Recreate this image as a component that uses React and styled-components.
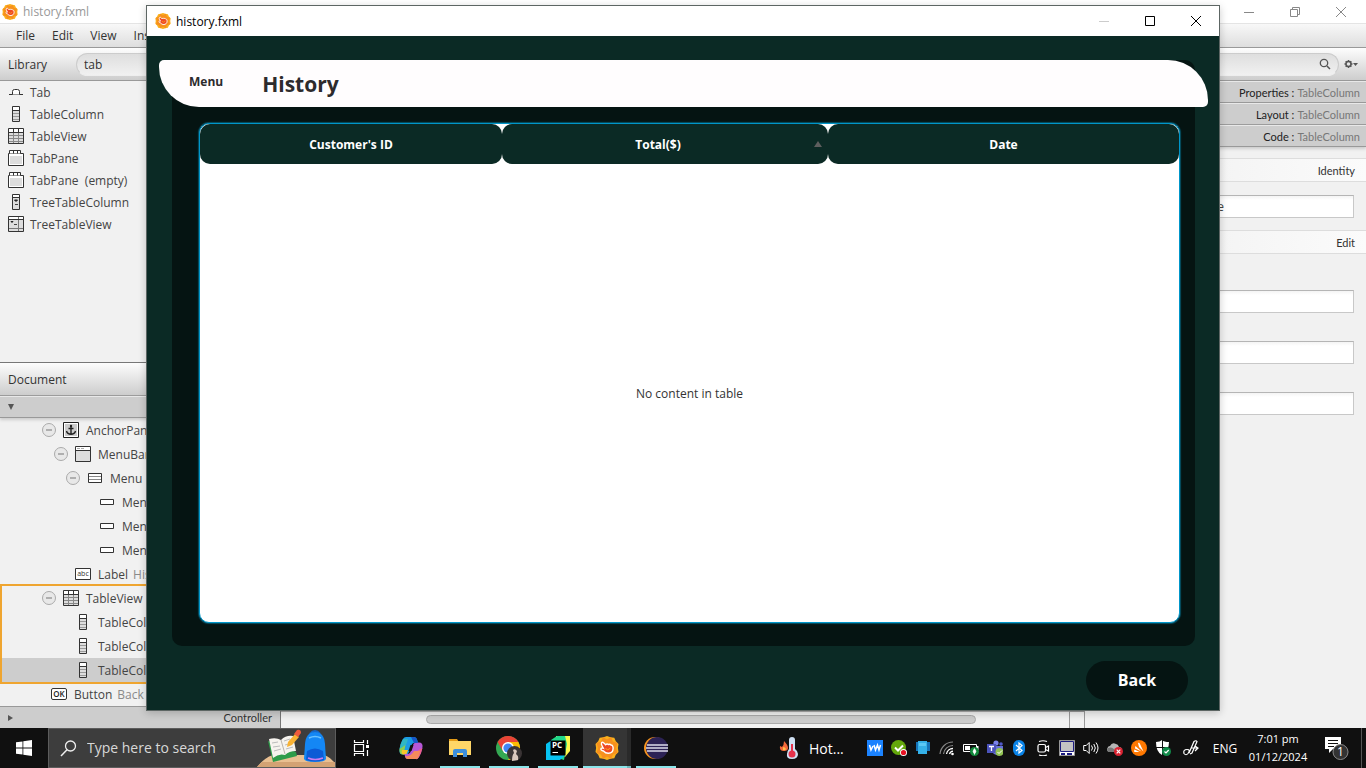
import React from "react";
import styled, { createGlobalStyle, css } from "styled-components";

const Global = createGlobalStyle`
  *, *::before, *::after { box-sizing: border-box; }
  html, body { margin: 0; padding: 0; }
  body, button, input {
    font-family: "Open Sans", "Noto Sans", sans-serif;
    font-size: 12px;
    line-height: 17px;
  }
  button { border: 0; padding: 0; background: none; color: inherit; cursor: default; }
  ul { list-style: none; margin: 0; padding: 0; }
  svg { display: block; flex: none; }
`;

const GREEN = "#0b2a25";
const DARK = "#051412";

/* ---------- editor in the background ---------- */

const Desktop = styled.div`
  display: flex;
  flex-direction: column;
  min-height: 100vh;
  overflow: hidden;
  background: #f1f1f1;
  color: #333;
`;

const Workspace = styled.main`
  position: relative;
  flex: 1;
  display: flex;
  flex-direction: column;
`;

const Caption = styled.header`
  display: flex;
  align-items: center;
  height: ${(p) => (p.$front ? 30 : 24)}px;
  padding: ${(p) => (p.$front ? "0 0 0 8px" : "0 2px")};
  background: #fff;
  color: ${(p) => (p.$front ? "#000" : "#999")};
  border-bottom: ${(p) => (p.$front ? 0 : 1)}px solid #e4e4e4;
`;

const CaptionTitle = styled.h1`
  flex: 1;
  margin: 0 0 0 5px;
  font-size: 12px;
  font-weight: 400;
`;

const CaptionButton = styled.button`
  display: grid;
  place-items: center;
  width: 46px;
  height: 100%;
  color: ${(p) => p.$color};
`;

const MenuStrip = styled.nav`
  display: flex;
  align-items: center;
  gap: 17px;
  height: 24px;
  padding-left: 16px;
  background: linear-gradient(#f8f8f8, #dedede);
  border-bottom: 1px solid #999;
`;

const Columns = styled.div`
  flex: 1;
  display: flex;
`;

const Column = styled.section`
  display: flex;
  flex-direction: column;
  min-width: 0;
  ${(p) => (p.$width ? `flex: none; width: ${p.$width}px;` : "flex: 1;")}
`;

const PanelHeader = styled.header`
  display: flex;
  align-items: center;
  gap: ${(p) => (p.$tight ? 5 : 12)}px;
  height: ${(p) => (p.$ruled ? 34 : 33)}px;
  padding: 0 8px;
  background: linear-gradient(#fdfdfd, #cdcdcd);
  border-top: ${(p) => (p.$ruled ? 1 : 0)}px solid #777;
  border-bottom: 1px solid #999;
`;

const PanelTitle = styled.h2`
  width: 56px;
  margin: 0;
  font-size: 12px;
  font-weight: 400;
`;

const SearchPill = styled.label`
  flex: 1;
  display: flex;
  align-items: center;
  height: 23px;
  padding: 0 7px;
  border: 1px solid #ccc;
  border-bottom-color: #eee;
  border-radius: 12px;
  background: linear-gradient(#dedede, #f1f1f1);
`;

const PillInput = styled.input`
  flex: 1;
  min-width: 0;
  border: 0;
  padding: 0;
  background: none;
  color: #333;
  outline: 0;
`;

const LibraryList = styled.ul`
  flex: 1;
`;

const LibraryRow = styled.li`
  display: flex;
  align-items: center;
  gap: 6px;
  height: 22px;
  padding-left: 8px;
  color: #444;
`;

const Section = styled.button`
  display: flex;
  align-items: center;
  justify-content: space-between;
  height: 22px;
  padding: 0 8px;
  background: #cdcdcd;
  border-top: 1px solid #e8e8e8;
  border-bottom: 1px solid #999;
  color: #333;
  box-shadow: ${(p) => (p.$raised ? "0 2px 3px #ccc" : "none")};
`;

const Tree = styled.ul`
  white-space: nowrap;
`;

const TreeGroup = styled.ul`
  margin-left: 2px;
  outline: 2px solid #efa530;
  & > li { margin-left: -2px; }
`;

const TreeRow = styled.li`
  display: flex;
  align-items: center;
  gap: 3px;
  height: 24px;
  padding-left: ${(p) => 30 + p.$depth * 12}px;
  background: ${(p) => (p.$selected ? "#cdcdcd" : "transparent")};
  color: #444;
`;

const Toggle = styled.button`
  display: grid;
  place-items: center;
  width: 14px;
  height: 14px;
  border: 1px solid #aaa;
  border-radius: 50%;
  background: #e8e8e8;
  color: #777;
`;

const ToggleSpace = styled.span`
  width: 14px;
`;

const IconSlot = styled.span`
  display: grid;
  place-items: center;
  width: ${(p) => p.$width}px;
`;

const Muted = styled.span`
  margin-left: 2px;
  color: #8a8a8a;
`;

const ControllerBar = styled(Section)`
  border-top-color: #999;
  border-bottom: 0;
  border-right: 1px solid #777;
  font-family: Lato, "Open Sans", sans-serif;
  font-size: 11px;
`;

const Canvas = styled.div`
  flex: 1;
`;

const ScrollTrack = styled.div`
  height: 17px;
  padding: 3px 93px 0 145px;
  border-top: 1px solid #aaa;
  background: #f1f1f1;
`;

const ScrollThumb = styled.div`
  height: 9px;
  border: 1px solid #aaa;
  border-radius: 5px;
  background: #cbcbcb;
`;

const ScrollRow = styled.div`
  display: grid;
  grid-template-columns: 1fr 16px;
`;

const ScrollCorner = styled.div`
  border: 1px solid #999;
  border-bottom: 0;
`;

const InspectorBar = styled(Section)`
  justify-content: flex-end;
  gap: 3px;
  padding: 0 6px;
  color: #222;
  font-family: Lato, "Open Sans", sans-serif;
  font-size: 11px;
`;

const BarTarget = styled.span`
  color: #777;
`;

const Inspector = styled.form`
  display: flex;
  flex-direction: column;
  padding-top: 11px;
`;

const GroupTitle = styled.h3`
  height: 24px;
  margin: 0;
  padding: 3px 11px;
  font-family: Lato, "Open Sans", sans-serif;
  font-size: 11px;
  font-weight: 400;
  text-align: right;
  background: linear-gradient(90deg, #eee, #fbfbfb);
  border-top: 1px solid #ddd;
  border-bottom: 1px solid #ddd;
`;

const FieldStack = styled.div`
  display: flex;
  flex-direction: column;
  align-items: flex-end;
  gap: 28px;
  padding: ${(p) => (p.$tall ? 36 : 13)}px 12px 12px;
`;

const Field = styled.input`
  width: 160px;
  height: 23px;
  padding: 0 4px;
  border: 1px solid #c8c8c8;
  border-top-color: #b5b5b5;
  background: linear-gradient(#f4f4f4, #fff 4px);
  color: #444;
`;

/* ---------- application window ---------- */

const AppWindow = styled.section`
  position: absolute;
  inset: 5px 146px 17px;
  display: flex;
  flex-direction: column;
  border: 1px solid #5d6664;
  background: ${GREEN};
  box-shadow: 0 2px 8px rgba(0, 0, 0, 0.2);
`;

const Scene = styled.div`
  flex: 1;
  display: flex;
  flex-direction: column;
  padding: 24px 11px 10px 12px;
`;

const Stage = styled.div`
  flex: 1;
  display: grid;
`;

const Card = styled.div`
  grid-area: 1 / 1;
  display: flex;
  margin: 0 13px;
  padding: 63px 15px 23px 27px;
  border-radius: 10px;
  background: ${DARK};
`;

const Banner = styled.div`
  grid-area: 1 / 1;
  align-self: start;
  display: flex;
  align-items: center;
  gap: 39px;
  height: 47px;
  padding: 0 30px;
  border-radius: 5px 40px 5px 40px;
  background: #fffdfe;
  color: #2d2b2d;
`;

const MenuButton = styled.button`
  font-weight: 700;
  margin-bottom: 4px;
`;

const PageTitle = styled.h2`
  margin: 0;
  font-size: 21px;
  line-height: 30px;
  font-weight: 700;
`;

const TableFrame = styled.div`
  flex: 1;
  display: flex;
  border: 1px solid #0096c9;
  border-radius: 10px;
  background: #fff;
  box-shadow: 0 0 1px 1px #064f63;
`;

const Table = styled.table`
  width: 100%;
  table-layout: fixed;
  border-spacing: 0;
  color: #333;
`;

const HeadRow = styled.tr`
  height: 40px;
  background: linear-gradient(#f4f4f4, #d8d8d8);
`;

const HeadCell = styled.th`
  width: ${(p) => p.$width};
  padding: 0;
  border-radius: 10px;
  background: ${GREEN};
  color: #fff;
  font-weight: 700;
`;

const HeadLabel = styled.div`
  display: grid;
  grid-template-columns: ${(p) => (p.$sorted ? "1fr 14px" : "1fr")};
  align-items: center;
`;

const EmptyCell = styled.td`
  padding: 0;
  text-align: center;
`;

const Actions = styled.div`
  display: flex;
  justify-content: flex-end;
  padding: 15px 20px 0 0;
`;

const BackButton = styled.button`
  width: 102px;
  height: 39px;
  border-radius: 20px;
  background: ${DARK};
  color: #fff;
  font-size: 16px;
  font-weight: 700;
`;

/* ---------- taskbar ---------- */

const Taskbar = styled.footer`
  display: flex;
  height: 40px;
  background: #101010;
  color: #fff;
`;

const TaskButton = styled.button`
  display: grid;
  place-items: center;
  width: ${(p) => p.$width || 48}px;
  color: #fff;
  ${(p) =>
    p.$running &&
    css`
      background: linear-gradient(#8be5ea, #8be5ea) center bottom / 40px 2px no-repeat;
    `}
  ${(p) =>
    p.$active &&
    css`
      background: linear-gradient(#8be5ea, #8be5ea) bottom / 100% 2px no-repeat, #353535;
      box-shadow: inset -4px 0 rgba(0, 0, 0, 0.2);
    `}
`;

const TaskList = styled.div`
  display: flex;
  gap: 1px;
  flex: 1;
`;

const SearchBox = styled.label`
  display: flex;
  align-items: center;
  gap: 10px;
  width: 288px;
  padding-left: 11px;
  border: 1px solid #5c5c5c;
  background: #3d3d3d;
`;

const SearchInput = styled.input`
  flex: 1;
  min-width: 0;
  padding: 0;
  border: 0;
  outline: 0;
  background: none;
  color: #ddd;
  font-size: 14px;
  line-height: 20px;
  &::placeholder { color: #d8d8d8; opacity: 1; }
`;

const Weather = styled.button`
  display: flex;
  align-items: center;
  gap: 8px;
  width: 84px;
  font-size: 14px;
`;

const Clock = styled.time`
  display: flex;
  flex-direction: column;
  justify-content: center;
  width: 70px;
  line-height: 18px;
  font-size: 11px;
  text-align: center;
`;

const ShowDesktop = styled.button`
  width: 5px;
  border-left: 1px solid #555;
`;

/* ---------- drawings ---------- */

const Svg = ({ w = 16, h = w, vb, children, ...rest }) => (
  <svg width={w} height={h} viewBox={vb || `0 0 ${w} ${h}`} fill="none" aria-hidden="true" {...rest}>
    {children}
  </svg>
);

const SceneBuilder = ({ size = 16 }) => (
  <Svg w={size} vb="0 0 24 24">
    <path d="M12 0l3.500 1.200 3.800.500 1.500 3.500L23.500 8l-.600 4 .600 4-2.700 2.800-1.500 3.500-3.800.500L12 24l-3.500-1.200-3.800-.500-1.500-3.500L.5 16l.600-4-.600-4 2.700-2.800 1.500-3.500 3.800-.500z" fill="#fbb01c" />
    <path d="M8 1l4 2.500L16 1l2 4.500 4.500 1.500L21 12l1.500 5-4.500 1.500-2 4.500-4-2.500L8 23l-2-4.500L1.500 17 3 12 1.500 7 6 5.500z" fill="#f7901e" />
    <path d="M6.500 7c1-1.500 2.600-.200 4 1.700 1.200-1 2-1 2.900-.200 1.200-.600 2-.300 2.600.500 1.400 0 2.200 1.500 2.100 3.500 0 2.600-2 4.600-4.700 4.800-2.200.100-3.600-.800-4.900-2.300-2-.500-3-1.600-2.500-2.500.500-.700 1.400-.600 2.300-.300-1-2-2.600-3.900-1.800-5.200z" fill="#ef4a24" stroke="#fff" strokeWidth="1.400" />
    <path d="M10.500 12l2 2 3-2" stroke="#f9a51a" />
  </Svg>
);

const Minimize = () => <Svg w={10}><path d="M0 5.500h10" stroke="currentColor" /></Svg>;
const Maximize = () => <Svg w={10}><path d="M.5.500h9v9h-9z" stroke="currentColor" /></Svg>;
const Restore = () => <Svg w={10}><path d="M.5 2.500h7v7h-7zM2.500 2.500v-2h7v7h-2" stroke="currentColor" /></Svg>;
const Close = () => <Svg w={10}><path d="M0 0l10 10M10 0L0 10" stroke="currentColor" /></Svg>;
const Lens = () => <Svg w={12}><circle cx="5" cy="5" r="3.700" stroke="#555" strokeWidth="1.300" /><path d="M8 8l3 3" stroke="#555" strokeWidth="1.500" /></Svg>;
const Gear = () => (
  <Svg w={14} h={10}>
    <circle cx="4.500" cy="5" r="2.500" stroke="#555" strokeWidth="1.500" />
    <path d="M4.500 1v1.500M4.500 7.500V9M.5 5H2M7 5h1.500M1.700 2.200l1 1M6.300 6.800l1 1M7.300 2.200l-1 1M2.700 6.800l-1 1" stroke="#555" strokeWidth="1.500" />
    <path d="M9 4h5l-2.500 3z" fill="#555" />
  </Svg>
);

const TabIcon = () => <Svg><path d="M1 10.500h14" stroke="#333" /><path d="M4.500 10.500v-3q0-2 2-2h3q2 0 2 2v3" fill="#fff" stroke="#333" /></Svg>;
const ColumnIcon = () => <Svg><path d="M4.500.500h7v15h-7z" fill="#ddd" stroke="#333" /><path d="M5 1h6v3H5z" fill="#fff" /><path d="M5 4.500h6" stroke="#333" /><path d="M5 7.500h6M5 10.500h6M5 13.500h6" stroke="#999" /></Svg>;
const GridIcon = () => <Svg><path d="M.5.500h15v15H.5z" fill="#ddd" stroke="#333" /><path d="M1 1h14v3H1z" fill="#fff" /><path d="M1 7.500h14M1 10.500h14M1 13.500h14M5.500 5v10M10.500 5v10" stroke="#888" /><path d="M1 4.500h14M5.500 1v3M10.500 1v3" stroke="#333" /></Svg>;
const TabPaneIcon = () => <Svg><path d="M.5 3.500h15v12H.5z" fill="#fff" stroke="#333" /><path d="M2 6h12v8H2z" fill="#ddd" /><path d="M1.500 3.500v-3h11v3M5.500.500v3M9.500.500v3" fill="#fff" stroke="#333" /></Svg>;
const TreeColumnIcon = () => <Svg><path d="M4.500.500h7v15h-7z" fill="#ddd" stroke="#333" /><path d="M5 1h6v2H5z" fill="#fff" /><path d="M5 3.500h6" stroke="#333" /><path d="M6.500 6h3L8 7.500z" fill="#222" stroke="#222" /><path d="M7 10.500h3" stroke="#444" /></Svg>;
const TreeViewIcon = () => <Svg><path d="M.5.500h15v15H.5z" fill="#ddd" stroke="#333" /><path d="M1 1h14v2H1z" fill="#fff" /><path d="M10.500 1v14M1 12.500h14" stroke="#777" /><path d="M1 3.500h14" stroke="#333" /><path d="M3 5.500h2L4 6.500z" fill="#222" stroke="#222" /><path d="M6 8.500h3" stroke="#444" /></Svg>;
const AnchorIcon = () => <Svg><path d="M.5.500h15v15H.5z" fill="#fff" stroke="#222" /><path d="M2 2h12v12H2z" fill="#ccc" /><circle cx="8" cy="4" r="1.200" fill="#222" /><path d="M8 4v8M5.500 6.500h5M3.500 9c.500 2 2 3.300 4.500 3.300s4-1.300 4.500-3.300" stroke="#222" strokeWidth="1.400" /></Svg>;
const MenuBarIcon = () => <Svg><path d="M.5.500h15v15H.5z" fill="#ddd" stroke="#333" /><path d="M1 1h14v3H1z" fill="#fff" /><path d="M1 4.500h14" stroke="#333" /><path d="M2 2.500h3M6 2.500h3" stroke="#aaa" /></Svg>;
const MenuIcon = () => <Svg><path d="M1.500 3.500h13v9h-13z" fill="#fff" stroke="#333" /><path d="M2 6.500h12M2 9.500h12" stroke="#888" /></Svg>;
const MenuItemIcon = () => <Svg><path d="M1.500 5.500h13v5h-13z" fill="#fff" stroke="#333" /></Svg>;
const LabelIcon = () => <Svg><path d="M.5 2.500h15v11H.5z" fill="#fff" stroke="#333" /><text x="8" y="10" textAnchor="middle" fontSize="7" fill="#333">abc</text></Svg>;
const ButtonIcon = () => <Svg><rect x=".5" y="2.500" width="15" height="11" rx="1.500" fill="#fff" stroke="#333" /><text x="8" y="11" textAnchor="middle" fontSize="8" fontWeight="600" fill="#222">OK</text></Svg>;
const Minus = () => <Svg w={6}><path d="M0 3h6" stroke="#777" /></Svg>;
const Down = () => <Svg w={6}><path d="M0 0h6L3 6z" fill="#555" /></Svg>;
const Right = () => <Svg w={6}><path d="M0 0v6l5-3z" fill="#555" /></Svg>;
const SortUp = () => <Svg w={8} h={6}><path d="M0 6h8L4 0z" fill="#5e5e5e" /></Svg>;

const WindowsLogo = () => <Svg><path d="M0 2.300l6.500-.900v6.200H0zM7.300 1.300L16 0v7.600H7.300zM0 8.400h6.500v6.200L0 13.700zM7.300 8.400H16V16l-8.700-1.300z" fill="#fff" /></Svg>;
const SearchLens = () => <Svg w={17}><circle cx="10.500" cy="6" r="5" stroke="#eee" strokeWidth="1.300" /><path d="M7 9.700L1 16" stroke="#eee" strokeWidth="1.500" /></Svg>;
const StudyArt = () => (
  <Svg w={78} h={38}>
    <path d="M0 38c4-5 9-10 16-12h50c6 1 9 5 12 8v4z" fill="#e9bf91" />
    <path d="M0 38l5-5h73v5z" fill="#d3a274" />
    <path d="M11 12l5 21 24-6-1-4z" fill="#2e9c4a" />
    <path d="M12 10q7-2 12 1 5-5 12-4l3 15q-7 0-11 4-6-2-12 3z" fill="#f6f3ee" />
    <path d="M24 11l4 14" stroke="#b9b4ac" />
    <path d="M15 14l6-1M16 18l7-1M17 22l7-2M27 12l6-2M28 16l7-2M29 20l7-2" stroke="#bbb" />
    <path d="M30 18l1-5 7-8 4 3-7 8z" fill="#f9b233" />
    <path d="M37 5l3-4q4-1 4 3l-3 4z" fill="#ef5a3c" />
    <path d="M53 5q5-6 10 0" stroke="#1667c9" strokeWidth="2" />
    <path d="M48 15q1-12 10-12t10 12l1 15q-1 3-11 3t-11-3z" fill="#1487f5" />
    <path d="M50 22q8-5 16 0l1 9q-9 3-18 0z" fill="#0b5bd6" />
    <path d="M51 29q7 3 15 0" stroke="#c77df0" strokeWidth="1.500" />
    <path d="M52 9q6-3 12 0" stroke="#6ac2ff" strokeWidth="1.500" />
  </Svg>
);
const TaskView = () => <Svg w={17} h={16}><path d="M1.500 0v2.500h9V0M1.500 16v-2.500h9V16M1.500 4.500h9v7h-9zM14.500 0v4M14.500 10v6" stroke="#fff" strokeWidth="1.200" /><path d="M13 5h3v3h-3z" fill="#fff" /></Svg>;
const Copilot = () => (
  <Svg w={24}>
    <path d="M7 1h8q2.500 0 3 2.500L19 7h-4q-2 0-3 3l-2 6q-1 2.500-3 2.500H4q-4 0-3.500-4.500Q1.500 7 4 3q1-2 3-2z" fill="#1b9be4" />
    <path d="M.5 13Q1.500 7 4 3h5Q7 11 3 13z" fill="#2fb7c4" />
    <path d="M.5 13l6-4-2 9.500H4q-4 0-3.500-5.500z" fill="#8ccf4d" />
    <path d="M3 14h6l-1 3q-.500 1.500-2 1.500H4q-2-1-1-4.500z" fill="#f7c52b" />
    <path d="M17 23H9q-2.500 0-3-2.500L5.500 18H9q2 0 3-3l2-6q1-2.500 3-2.500h3q4 0 3.500 4.500-1 6-3.500 10-1 2-3 2z" fill="#b558d8" />
    <path d="M23.500 12Q22 18 20 21t-3 2h-4q4-9 10.500-11z" fill="#ee5f8a" />
    <path d="M17 23H9q-2.500 0-3-3 6 1 9-5h6q-1 8-4 8z" fill="#f58a5b" />
    <path d="M12 1h3q2.500 0 3 2.500L19 7h-4q-2-4-3-6z" fill="#1757c8" />
    <path d="M11.500 9h3L12.500 15h-3z" fill="#101010" />
  </Svg>
);
const Folder = () => <Svg w={22} h={20}><path d="M0 1h8l2 3H0z" fill="#e59c18" /><path d="M0 3h22v14H0z" fill="#ffd667" /><path d="M4 19v-6q0-2 2-2h10q2 0 2 2v6h-4v-4H8v4z" fill="#3d8fdc" /></Svg>;
const Chrome = () => (
  <Svg w={26} h={25}>
    <circle cx="12" cy="12" r="12" fill="#34a853" />
    <path d="M1.600 6A12 12 0 0 1 22.400 6H12z" fill="#ea4335" /><path d="M1.600 6l5.200 9L12 6z" fill="#ea4335" />
    <path d="M22.400 6A12 12 0 0 1 12 24l5.200-9L12 6z" fill="#fbbc04" />
    <circle cx="12" cy="12" r="6" fill="#fff" /><circle cx="12" cy="12" r="4.600" fill="#4285f4" />
    <circle cx="18.500" cy="17.500" r="7.500" fill="#3a3435" />
    <path d="M16 25q0-6 2-8l-1-3q2-2 4 1l-1 3q3 2 2 6z" fill="#d9c7bd" />
  </Svg>
);
const PyCharm = () => (
  <Svg w={24}>
    <path d="M10 0h14v15l-5 6-9-8z" fill="#fcf84a" />
    <path d="M5 4l6-4h8l2 8-3 16-13-4z" fill="#21d789" />
    <path d="M0 8l6-4 13 15-5 5H0z" fill="#07c3f2" />
    <path d="M4.500 4.500h15v15h-15z" fill="#000" />
    <text x="6" y="12" fontSize="8" fontWeight="700" fill="#fff">PC</text><path d="M6.500 16.500h5.500" stroke="#fff" />
  </Svg>
);
const Eclipse = () => <Svg w={24}><circle cx="11" cy="12" r="11" fill="#f7941e" /><circle cx="13" cy="12" r="11" fill="#2c2255" /><path d="M3 9h21M2 12h22M3 15h21" stroke="#dcdcea" strokeWidth="1.700" /></Svg>;

const Thermo = () => (
  <Svg w={22} h={24}>
    <path d="M5 5q4 4 4 7t-4 3q-5 0-4-5l2 1q2-2 2-6z" fill="#f4693a" />
    <path d="M4 11q2 0 3 2-1 2-3 1z" fill="#ffc04a" />
    <path d="M10 4q0-3 3-3t3 3v9q3 2 3 5 0 5-6 5t-5-5q0-3 2-5z" fill="#cfe0f3" />
    <circle cx="13" cy="18" r="3.500" fill="#e5324b" /><path d="M13 8v9" stroke="#e5324b" strokeWidth="2" />
  </Svg>
);

const trayIcons = [
  ["Wondershare", <Svg><path d="M0 0h16v16H0z" fill="#1b83ff" /><path d="M2.500 5l1.500 5 2-4M7 5l1.500 5 2-5 1.500 5 1.500-5" stroke="#fff" strokeWidth="1.500" /></Svg>],
  ["Skype", <Svg><circle cx="7.500" cy="7.500" r="7.500" fill="#64a70b" /><path d="M4 7.500l3 3 5-5" stroke="#fff" strokeWidth="2" /><circle cx="12.500" cy="12.500" r="3.500" fill="#fff" /><circle cx="12.500" cy="12.500" r="2.600" fill="#e81123" /></Svg>],
  ["Display", <Svg><path d="M1 2h14v9H1z" fill="#1673b8" /><path d="M3 1h9v13H3z" fill="#35b1e8" /><path d="M4 3h7v3H4z" fill="#5cc8f5" /></Svg>],
  ["Wi-Fi", <Svg><path d="M1 14A13 13 0 0 1 14 2M4.500 14A9.500 9.500 0 0 1 14 5.500" stroke="#888" strokeWidth="1.200" /><path d="M7.500 14A6.500 6.500 0 0 1 14 8.500M10.500 14a4 4 0 0 1 3.500-2.800" stroke="#fff" strokeWidth="1.300" /><circle cx="13.500" cy="14" r="1.300" fill="#fff" /></Svg>],
  ["Battery", <Svg><path d="M.5 4.500h13v7H.5z" stroke="#fff" /><path d="M2 6h5v4H2z" fill="#fff" /><path d="M14 6h1.500v4H14z" fill="#fff" /><circle cx="11.500" cy="11.500" r="4.500" fill="#128a3b" /><path d="M11.500 8.500q3 3 0 5.500-3-2.500 0-5.500zM11.500 12v3" fill="#fff" stroke="#fff" strokeWidth=".5" /></Svg>],
  ["Teams", <Svg><circle cx="9" cy="3" r="2.600" fill="#7b83eb" /><circle cx="14" cy="4" r="1.800" fill="#5059c9" /><path d="M5 6h11v5q-1 4-5 4-5 0-6-4z" fill="#6670d8" /><path d="M0 4h9v9H0z" fill="#4b53bc" /><path d="M2 6.500h5M4.500 6.500V11" stroke="#fff" strokeWidth="1.300" /><circle cx="12.500" cy="12" r="4" fill="#92c353" /><path d="M10.500 12l1.500 1.500 3-3" stroke="#fff" /></Svg>],
  ["Bluetooth", <Svg><rect x="2" width="12" height="16" rx="6" fill="#0a84e8" /><path d="M5 5l6 5.500L8 13V3l3 2.500L5 11" stroke="#fff" strokeWidth="1.200" /></Svg>],
  ["Camera", <Svg><rect x="3" y="4.500" width="7.500" height="7.500" rx="1.500" stroke="#fff" strokeWidth="1.200" /><path d="M10.500 7.500l3-1.500v5l-3-1.500M4 1.500q4-1.500 8 0M4 15q4 1.500 8 0" stroke="#fff" strokeWidth="1.200" /></Svg>],
  ["Touchpad", <Svg><path d="M.5.500h15v15H.5z" fill="#fff" stroke="#999" /><path d="M1.500 1.500h13v10h-13z" fill="#c3c3c3" stroke="#1c1c80" /><path d="M2 14h4M8 14h5" stroke="#1c1c80" strokeWidth="2" /></Svg>],
  ["Volume", <Svg><path d="M.7 5.500h2.500l3-3v11l-3-3H.7z" stroke="#fff" /><path d="M8.500 5.500q2 2.500 0 5M10.800 4q3 4 0 8M13 2.500q4 5.500 0 11" stroke="#fff" /></Svg>],
  ["OneDrive", <Svg><path d="M2 12q-3-1-1.500-4Q1 6 3 6q2-4 6-2 2 0 3 3 3 0 3 3 0 2-2 2z" fill="#b5b5b5" /><path d="M2 12q-3-1-1-4 5-2 8 4z" fill="#777" /><circle cx="11.500" cy="11.500" r="4.500" fill="#d92231" /><path d="M9.700 9.700l3.600 3.600M13.300 9.700l-3.600 3.600" stroke="#fff" strokeWidth="1.200" /></Svg>],
  ["Avast", <Svg><circle cx="8" cy="8" r="8" fill="#ff7800" /><path d="M7 3q1-1 2 1l3.500 7.500L8 7zM4.500 6l6 5.500-6.500-3q0-2 .500-2.500zM3.500 9.500l5 2.500h-5q-1-1 0-2.500z" fill="#fff" /></Svg>],
  ["Security", <Svg><path d="M1 2q4 0 6-2 2 2 7 2 0 9-7 13Q1 12 1 2z" fill="#fff" /><path d="M7.500 0v15M1 7.500h13" stroke="#101010" /><circle cx="11.500" cy="11.500" r="4.500" fill="#128a4a" /><path d="M9.500 11.500l1.500 1.500 2.700-3" stroke="#fff" strokeWidth="1.200" /></Svg>],
];
const Pen = () => <Svg><path d="M1 13.500q-1-4 3-4t1 4q-2 2.500-4 0zM6 13L11 1.500q2-1.500 3 0L9 13l-2 1M8 8h7M12 6l3 2-3 3" stroke="#fff" strokeWidth="1.200" /></Svg>;
const Notice = () => (
  <Svg w={26} h={26}>
    <path d="M1 2h16v12H9l-4 4v-4H1z" fill="#fff" /><path d="M4 5.500h10M4 8.500h10M4 11.500h6" stroke="#101010" />
    <circle cx="16.500" cy="17" r="7.500" fill="#333" stroke="#8a8a8a" /><text x="16.500" y="21" textAnchor="middle" fontSize="12" fill="#fff">1</text>
  </Svg>
);

/* ---------- data ---------- */

const library = [
  ["Tab", TabIcon], ["TableColumn", ColumnIcon], ["TableView", GridIcon], ["TabPane", TabPaneIcon],
  ["TabPane\u00a0 (empty)", TabPaneIcon], ["TreeTableColumn", TreeColumnIcon], ["TreeTableView", TreeViewIcon],
];

const treeTop = [
  { name: "AnchorPane", depth: 1, Icon: AnchorIcon, open: true },
  { name: "MenuBar", depth: 2, Icon: MenuBarIcon, open: true },
  { name: "Menu", depth: 3, Icon: MenuIcon, open: true },
  { name: "MenuItem", depth: 4, Icon: MenuItemIcon },
  { name: "MenuItem", depth: 4, Icon: MenuItemIcon },
  { name: "MenuItem", depth: 4, Icon: MenuItemIcon },
  { name: "Label", depth: 2, Icon: LabelIcon, note: "History" },
];
const treeTable = [
  { name: "TableView", depth: 1, Icon: GridIcon, open: true },
  { name: "TableColumn", depth: 2, Icon: ColumnIcon },
  { name: "TableColumn", depth: 2, Icon: ColumnIcon },
  { name: "TableColumn", depth: 2, Icon: ColumnIcon, selected: true },
];
const treeEnd = [{ name: "Button", depth: 0, Icon: ButtonIcon, note: "Back" }];

const columns = [
  { title: "Customer's ID", width: "302px" },
  { title: "Total($)", width: "326px", sorted: true },
  { title: "Date", width: "auto" },
];

const tasks = [
  ["Task View", TaskView, { $width: 50 }],
  ["Copilot", Copilot, {}],
  ["File Explorer", Folder, { $running: true }],
  ["Chrome", Chrome, { $running: true }],
  ["PyCharm", PyCharm, { $running: true }],
  ["Scene Builder", () => <SceneBuilder size={24} />, { $active: true }],
  ["Eclipse", Eclipse, { $running: true }],
];

const TreeItems = ({ items }) =>
  items.map(({ name, depth, Icon, open, note, selected }, i) => (
    <TreeRow key={i} $depth={depth} $selected={selected}>
      {open ? <Toggle aria-label={`Collapse ${name}`}><Minus /></Toggle> : <ToggleSpace />}
      <IconSlot $width={24}><Icon /></IconSlot>
      <span>{name}</span>
      {note && <Muted>{note}</Muted>}
    </TreeRow>
  ));

function Editor() {
  return (
    <>
      <Caption>
        <SceneBuilder />
        <CaptionTitle>history.fxml</CaptionTitle>
        <CaptionButton $color="#888" aria-label="Minimize editor"><Minimize /></CaptionButton>
        <CaptionButton $color="#888" aria-label="Restore editor"><Restore /></CaptionButton>
        <CaptionButton $color="#888" aria-label="Close editor"><Close /></CaptionButton>
      </Caption>
      <MenuStrip>
        <button>File</button>
        <button>Edit</button>
        <button>View</button>
        <button>Insert</button>
      </MenuStrip>
      <Columns>
        <Column $width={281}>
          <PanelHeader>
            <PanelTitle>Library</PanelTitle>
            <SearchPill><PillInput aria-label="Search library" defaultValue="tab" /></SearchPill>
          </PanelHeader>
          <LibraryList>
            {library.map(([name, Icon]) => (
              <LibraryRow key={name}><Icon /><span>{name}</span></LibraryRow>
            ))}
          </LibraryList>
          <PanelHeader $ruled><PanelTitle>Document</PanelTitle></PanelHeader>
          <Section $raised aria-label="Hierarchy"><Down /></Section>
          <Tree>
            <TreeItems items={treeTop} />
            <li><TreeGroup><TreeItems items={treeTable} /></TreeGroup></li>
            <TreeItems items={treeEnd} />
          </Tree>
          <ControllerBar><Right /><span>Controller</span></ControllerBar>
        </Column>
        <Column>
          <PanelHeader />
          <Canvas />
          <ScrollRow>
            <ScrollTrack><ScrollThumb /></ScrollTrack>
            <ScrollCorner />
          </ScrollRow>
        </Column>
        <Column $width={281}>
          <PanelHeader $tight>
            <SearchPill><PillInput aria-label="Search inspector" /><Lens /></SearchPill>
            <button aria-label="Inspector options"><Gear /></button>
          </PanelHeader>
          {["Properties", "Layout", "Code"].map((name) => (
            <InspectorBar key={name} $raised={name === "Code"}>
              <span>{name} :</span><BarTarget>TableColumn</BarTarget>
            </InspectorBar>
          ))}
          <Inspector>
            <GroupTitle>Identity</GroupTitle>
            <FieldStack><Field aria-label="fx:id" defaultValue="date" /></FieldStack>
            <GroupTitle>Edit</GroupTitle>
            <FieldStack $tall>
              <Field aria-label="On Edit Cancel" />
              <Field aria-label="On Edit Commit" />
              <Field aria-label="On Edit Start" />
            </FieldStack>
          </Inspector>
        </Column>
      </Columns>
    </>
  );
}

function HistoryWindow() {
  return (
    <AppWindow>
      <Caption $front>
        <SceneBuilder />
        <CaptionTitle>history.fxml</CaptionTitle>
        <CaptionButton $color="#ccc" aria-label="Minimize"><Minimize /></CaptionButton>
        <CaptionButton $color="#000" aria-label="Maximize"><Maximize /></CaptionButton>
        <CaptionButton $color="#000" aria-label="Close"><Close /></CaptionButton>
      </Caption>
      <Scene>
        <Stage>
          <Card>
            <TableFrame>
              <Table>
                <thead>
                  <HeadRow>
                    {columns.map((c) => (
                      <HeadCell key={c.title} $width={c.width}>
                        <HeadLabel $sorted={c.sorted}><span>{c.title}</span>{c.sorted && <SortUp />}</HeadLabel>
                      </HeadCell>
                    ))}
                  </HeadRow>
                </thead>
                <tbody>
                  <tr><EmptyCell colSpan={3}>No content in table</EmptyCell></tr>
                </tbody>
              </Table>
            </TableFrame>
          </Card>
          <Banner>
            <MenuButton>Menu</MenuButton>
            <PageTitle>History</PageTitle>
          </Banner>
        </Stage>
        <Actions><BackButton>Back</BackButton></Actions>
      </Scene>
    </AppWindow>
  );
}

export default function App() {
  return (
    <Desktop>
      <Global />
      <Workspace>
        <Editor />
        <HistoryWindow />
      </Workspace>
      <Taskbar>
        <TaskButton aria-label="Start"><WindowsLogo /></TaskButton>
        <SearchBox>
          <SearchLens />
          <SearchInput aria-label="Search" placeholder="Type here to search" />
          <StudyArt />
        </SearchBox>
        <TaskList>
          {tasks.map(([name, Icon, state]) => (
            <TaskButton key={name} aria-label={name} {...state}><Icon /></TaskButton>
          ))}
        </TaskList>
        <Weather><Thermo />Hot...</Weather>
        {trayIcons.map(([name, icon]) => (
          <TaskButton key={name} $width={24} aria-label={name}>{icon}</TaskButton>
        ))}
        <TaskButton $width={32} aria-label="Pen"><Pen /></TaskButton>
        <TaskButton $width={36}>ENG</TaskButton>
        <Clock><span>7:01 pm</span><span>01/12/2024</span></Clock>
        <TaskButton aria-label="Notifications"><Notice /></TaskButton>
        <ShowDesktop aria-label="Show desktop" />
      </Taskbar>
    </Desktop>
  );
}
